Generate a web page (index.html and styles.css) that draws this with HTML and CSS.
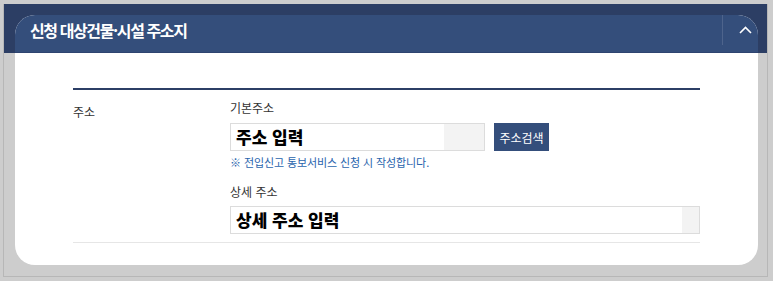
FILE: index.html
```html
<!DOCTYPE html>
<html lang="ko">
<head>
    <meta charset="UTF-8">
    <meta name="viewport" content="width=device-width, initial-scale=1.0">
    <title>신청 대상건물·시설 주소지</title>
    <link rel="stylesheet" href="styles.css">
</head>
<body>
    <div class="frame">
        <div class="card">
            <div class="card-head">
                <h2 class="card-title">신청 대상건물·시설 주소지</h2>
                <button type="button" class="toggle" aria-label="접기">
                    <svg width="13" height="8" viewBox="0 0 13 8">
                        <path d="M1 7 L6.5 1.5 L12 7" fill="none" stroke="#fff" stroke-width="1.6"/>
                    </svg>
                </button>
            </div>

            <div class="card-body">
                <div class="form-table">
                    <div class="form-row">
                        <div class="row-label">주소</div>
                        <div class="row-fields">
                            <div class="field-label">기본주소</div>
                            <div class="field-line">
                                <div class="field-input field-short">
                                    <span class="field-value">주소 입력</span>
                                    <span class="field-pad"></span>
                                </div>
                                <button type="button" class="btn-search">주소검색</button>
                            </div>
                            <p class="field-note">※ 전입신고 통보서비스 신청 시 작성합니다.</p>

                            <div class="field-label">상세 주소</div>
                            <div class="field-input field-long">
                                <span class="field-value">상세 주소 입력</span>
                                <span class="field-pad"></span>
                            </div>
                        </div>
                    </div>
                </div>
            </div>
        </div>
    </div>
</body>
</html>
```

FILE: styles.css
```css
body {
    margin: 0;
    background-color: #cdcdcd;
    font-family: "Noto Sans CJK KR", "Noto Sans", sans-serif;
    color: #333;
}

/* outer frame with the navy band on top */
.frame {
    margin: 4px 5px 0 3px;
    padding: 11px 9px 11px 11px;
    border: 1px solid #b7b7b7;
    border-top: none;
    background: linear-gradient(#2c3e64 0, #2c3e64 49px, #cdcdcd 49px);
}

.card {
    width: 743px;
    height: 250px;
    border-radius: 20px;
    overflow: hidden;
    background-color: #fff;
}

/* header of the card */
.card-head {
    display: flex;
    align-items: flex-start;
    height: 37px;
    background-color: #344e7b;
    border-bottom: 1px solid #2e4470;
}

.card-title {
    flex: 1;
    margin: 0;
    padding-left: 15px;
    line-height: 30px;
    font-size: 16px;
    font-weight: bold;
    letter-spacing: -1.4px;
    color: #fff;
}

.toggle {
    display: flex;
    align-items: center;
    justify-content: center;
    width: 36px;
    height: 30px;
    padding: 0 0 0 9px;
    border: none;
    border-left: 1px solid rgba(255, 255, 255, 0.13);
    background: none;
}

/* body of the card */
.card-body {
    padding: 35px 58px 0 58px;
}

.form-table {
    border-top: 2px solid #2c3f66;
}

.form-row {
    display: flex;
    padding: 8px 0 8px 0;
    border-bottom: 1px solid #e6e6e6;
}

.row-label {
    width: 157px;
    padding-top: 4px;
    font-size: 12px;
    line-height: 20px;
}

.row-fields {
    flex: 1;
}

.field-label {
    font-size: 12px;
    line-height: 20px;
}

.field-line {
    display: flex;
    margin-top: 5px;
}

.field-input {
    display: flex;
    height: 26px;
    border: 1px solid #dcdcdc;
    background-color: #f3f3f3;
}

.field-short {
    width: 253px;
}

.field-long {
    margin-top: 4px;
}

.field-value {
    flex: 1;
    padding-left: 5px;
    background-color: #fff;
    font-size: 17px;
    font-weight: 900;
    line-height: 26px;
    color: #000;
}

.field-short .field-pad {
    width: 40px;
}

.field-long .field-pad {
    width: 17px;
}

.btn-search {
    width: 55px;
    height: 28px;
    margin-left: 9px;
    padding: 0;
    border: none;
    background-color: #344e7b;
    color: #fff;
    font-family: inherit;
    font-size: 12px;
}

.field-note {
    margin: 3px 0 12px 0;
    font-size: 11px;
    line-height: 16px;
    letter-spacing: -0.1px;
    color: #2a64ad;
}
```
